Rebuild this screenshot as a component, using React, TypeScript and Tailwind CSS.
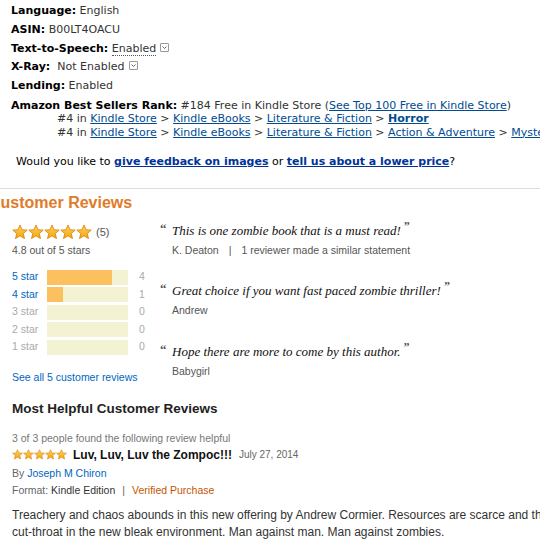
import React from 'react';

const verdana = 'font-["DejaVu_Sans",Verdana,sans-serif]';
const arial = 'font-["Liberation_Sans",Arial,sans-serif]';

const Star = ({ size }: { size: number }) => (
  <svg width={size} height={size} viewBox="0 0 24 24" className="shrink-0">
    <defs>
      <linearGradient id="sg" x1="0" y1="0" x2="0" y2="1">
        <stop offset="0" stopColor="#ffd35a" />
        <stop offset="1" stopColor="#f5a312" />
      </linearGradient>
    </defs>
    <polygon
      points="12,1.5 15.1,8.6 22.8,9.2 16.9,14.3 18.7,21.9 12,17.8 5.3,21.9 7.1,14.3 1.2,9.2 8.9,8.6"
      fill="url(#sg)"
      stroke="#d9860c"
      strokeWidth="1.3"
      strokeLinejoin="round"
    />
  </svg>
);

const Drop = () => (
  <span className="inline-flex items-center justify-center w-[9px] h-[9px] border border-[#9a9a9a] rounded-[1px] ml-[4px] align-[1px]">
    <svg width="7" height="7" viewBox="0 0 7 7">
      <path d="M1.5 2.5 L3.5 4.5 L5.5 2.5" fill="none" stroke="#666" strokeWidth="1" />
    </svg>
  </span>
);

const L = ({ children }: { children: React.ReactNode }) => (
  <a className="text-[#004b91] underline">{children}</a>
);

const bars = [
  { label: '5 star', pct: 80, count: 4, on: true },
  { label: '4 star', pct: 20, count: 1, on: true },
  { label: '3 star', pct: 0, count: 0, on: false },
  { label: '2 star', pct: 0, count: 0, on: false },
  { label: '1 star', pct: 0, count: 0, on: false },
];

const quotes = [
  { text: 'This is one zombie book that is a must read!', by: 'K. Deaton', extra: '1 reviewer made a similar statement' },
  { text: 'Great choice if you want fast paced zombie thriller!', by: 'Andrew' },
  { text: 'Hope there are more to come by this author.', by: 'Babygirl' },
];

const Quote = ({ text, by, extra }: { text: string; by: string; extra?: string }) => (
  <div className="mb-[24.5px] last:mb-0">
    <div className="flex items-start h-[18px]">
      <span className="w-[12px] font-['Liberation_Serif',serif] font-bold text-[13px] leading-[13px] text-[#555]">&ldquo;</span>
      <span className="font-['Liberation_Serif',Georgia,serif] italic text-[13px] leading-[18px] text-[#111]">
        {text}
        <span className="not-italic font-bold text-[12px] text-[#555] relative top-[-5px] ml-[3px]">&rdquo;</span>
      </span>
    </div>
    <div className={`${arial} mt-[2px] pl-[12px] text-[10.5px] leading-[16px] text-[#555] whitespace-nowrap`}>
      {by}
      {extra && (
        <>
          <span className="mx-[10px]">|</span>
          {extra}
        </>
      )}
    </div>
  </div>
);

export default function App() {
  return (
    <div className="w-[540px] h-[540px] overflow-hidden bg-white">
      <div className={`${verdana} text-[11px] text-[#333] pt-[2px] pl-[11px] whitespace-nowrap`}>
        <div className="leading-[18.75px]"><b className="text-black">Language:</b> English</div>
        <div className="leading-[18.75px]"><b className="text-black">ASIN:</b> B00LT4OACU</div>
        <div className="leading-[18.75px]">
          <b className="text-black">Text-to-Speech:</b>{' '}
          <span className="border-b border-dotted border-[#555]">Enabled</span>
          <Drop />
        </div>
        <div className="leading-[18.75px]">
          <b className="text-black">X-Ray:</b>&nbsp; Not Enabled
          <Drop />
        </div>
        <div className="leading-[18.75px]"><b className="text-black">Lending:</b> Enabled</div>
        <div className="leading-[13.5px] mt-[3px]">
          <div>
            <b className="text-black">Amazon Best Sellers Rank:</b> #184 Free in Kindle Store (<L>See Top 100 Free in Kindle Store</L>)
          </div>
          <div className="pl-[46px]">
            #4 in <L>Kindle Store</L> &gt; <L>Kindle eBooks</L> &gt; <L>Literature &amp; Fiction</L> &gt;{' '}
            <b className="text-[#004b91] underline">Horror</b>
          </div>
          <div className="pl-[46px]">
            #4 in <L>Kindle Store</L> &gt; <L>Kindle eBooks</L> &gt; <L>Literature &amp; Fiction</L> &gt;{' '}
            <L>Action &amp; Adventure</L> &gt; <L>Mystery</L>
          </div>
        </div>
        <div className="leading-[13.5px] mt-[16px] pl-[5px] text-black">
          Would you like to <b className="text-[#003399] underline">give feedback on images</b> or{' '}
          <b className="text-[#003399] underline">tell us about a lower price</b>?
        </div>
      </div>

      <div className="mt-[19px] border-t border-[#dddddd]" />

      <div className={`${arial} pl-[12px]`}>
        <h2 className="ml-[-23px] mt-[4px] text-[16px] leading-[20px] font-bold text-[#e07b2a] whitespace-nowrap">
          Customer Reviews
        </h2>

        <div className="flex mt-[12px]">
          <div className="w-[148px] shrink-0">
            <div className="flex items-center h-[15px]">
              <div className="flex">
                {[0, 1, 2, 3, 4].map((i) => (
                  <Star key={i} size={16} />
                ))}
              </div>
              <span className="ml-[4px] text-[11px] text-[#555]">(5)</span>
            </div>
            <div className="text-[10.5px] leading-[16px] text-[#555] mt-[2px] whitespace-nowrap">4.8 out of 5 stars</div>

            <div className="flex flex-col gap-[2.5px] mt-[12px]">
              {bars.map((b) => (
                <div key={b.label} className="flex items-center h-[15px] text-[10.5px]">
                  <span className={`w-[35px] ${b.on ? 'text-[#0066c0]' : 'text-[#aaaaaa]'}`}>{b.label}</span>
                  <div className="w-[81px] h-[15px] bg-[#f3f3d4]">
                    <div className="h-full bg-[#fdc05e]" style={{ width: `${b.pct}%` }} />
                  </div>
                  <span className="ml-[11px] text-[#aaaaaa]">{b.count}</span>
                </div>
              ))}
            </div>

            <div className="mt-[14px] text-[10.5px] leading-[16px] text-[#0066c0] whitespace-nowrap">
              See all 5 customer reviews
            </div>
          </div>

          <div className="-mt-[3px]">
            {quotes.map((q) => (
              <Quote key={q.by} {...q} />
            ))}
          </div>
        </div>

        <h3 className="mt-[15px] text-[13.5px] leading-[18px] font-bold text-[#222] whitespace-nowrap">
          Most Helpful Customer Reviews
        </h3>
        <div className="mt-[13px] text-[10.5px] leading-[14px] text-[#777] whitespace-nowrap">
          3 of 3 people found the following review helpful
        </div>
        <div className="flex items-center mt-[1px] h-[18px] whitespace-nowrap">
          <div className="flex">
            {[0, 1, 2, 3, 4].map((i) => (
              <Star key={i} size={11} />
            ))}
          </div>
          <b className="ml-[6px] text-[12px] text-[#111]">Luv, Luv, Luv the Zompoc!!!</b>
          <span className="ml-[7px] text-[10px] text-[#666]">July 27, 2014</span>
        </div>
        <div className="mt-[1.5px] text-[10.5px] leading-[17px] text-[#666] whitespace-nowrap">
          By <span className="text-[#0066c0]">Joseph M Chiron</span>
        </div>
        <div className="text-[10.5px] leading-[17px] text-[#666] whitespace-nowrap">
          Format: <span className="text-[#333]">Kindle Edition</span>
          <span className="mx-[7px]">|</span>
          <span className="text-[#c45500]">Verified Purchase</span>
        </div>
        <div className="mt-[8px] text-[12px] leading-[17px] text-[#333] whitespace-nowrap">
          <div>Treachery and chaos abounds in this new offering by Andrew Cormier. Resources are scarce and th</div>
          <div>cut-throat in the new bleak environment. Man against man. Man against zombies.</div>
        </div>
      </div>
    </div>
  );
}
